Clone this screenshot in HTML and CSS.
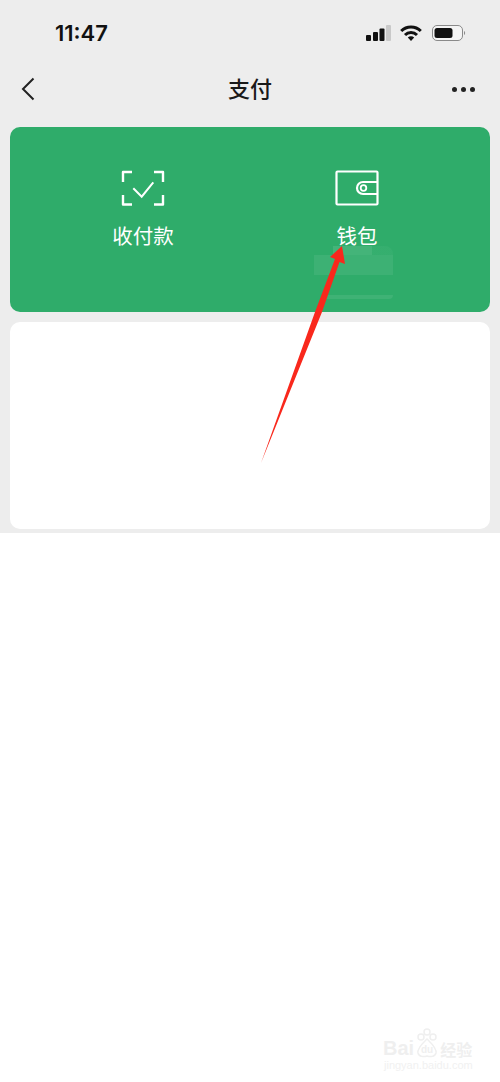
FILE: index.html
```html
<!DOCTYPE html>
<html>
    <head>
        <meta charset="utf-8">
        <link rel="stylesheet" href="styles.css">
    </head>
    <body>
        <div class="screen">
            <div class="status">
                <span class="time">11:47</span>
                <div class="status_icons">
                    <svg width="25" height="16" viewBox="0 0 25 16">
                        <rect x="0" y="10" width="5" height="6" rx="1" fill="#111"/>
                        <rect x="7" y="7" width="5" height="9" rx="1" fill="#111"/>
                        <rect x="13.5" y="3.5" width="5" height="12.5" rx="1" fill="#111"/>
                        <rect x="20" y="0" width="5" height="16" rx="1" fill="#c9c9c9"/>
                    </svg>
                    <svg width="22" height="16" viewBox="0 0 22 16">
                        <path d="M1.2 6 A14 14 0 0 1 20.8 6" fill="none" stroke="#111" stroke-width="3"/>
                        <path d="M5 10 A8.5 8.5 0 0 1 17 10" fill="none" stroke="#111" stroke-width="3"/>
                        <path d="M7.8 12.6 A4.6 4.6 0 0 1 14.2 12.6 L11 16 Z" fill="#111"/>
                    </svg>
                    <svg class="battery" width="34" height="16" viewBox="0 0 34 16">
                        <rect x="0.5" y="0.5" width="30" height="15" rx="4.5" fill="#f4f4f4" stroke="#8a8a8a"/>
                        <rect x="2.5" y="3" width="18" height="10" rx="2.5" fill="#111"/>
                        <path d="M32 6 C33.5 6.5 33.5 9.5 32 10 Z" fill="#8a8a8a"/>
                    </svg>
                </div>
            </div>
            <div class="nav">
                <svg class="back" width="14" height="24" viewBox="0 0 14 24">
                    <path d="M12.5 1.5 L2 12 L12.5 22.5" fill="none" stroke="#222" stroke-width="2"/>
                </svg>
                <h2 class="title">支付</h2>
                <div class="more"><i></i><i></i><i></i></div>
            </div>
            <div class="pay_card">
                <div class="pay_item">
                    <svg width="44" height="36" viewBox="0 0 44 36">
                        <path d="M11 2 H2 V12 M33 2 H42 V12 M2 25 V34.5 H11 M42 25 V34.5 H33" fill="none" stroke="#fff" stroke-width="2.4" stroke-linejoin="round"/>
                        <path d="M12.3 18.3 L20.7 26.7 L32.3 12.3" fill="none" stroke="#fff" stroke-width="2"/>
                    </svg>
                    <span>收付款</span>
                </div>
                <div class="pay_item">
                    <svg width="44" height="36" viewBox="0 0 44 36">
                        <rect x="1.5" y="1.5" width="41" height="33" rx="1" fill="none" stroke="#fff" stroke-width="2.2"/>
                        <path d="M42 12 H28 A6 6 0 0 0 28 24 H42" fill="none" stroke="#fff" stroke-width="2.2"/>
                        <circle cx="28.5" cy="18" r="2.8" fill="none" stroke="#fff" stroke-width="1.8"/>
                    </svg>
                    <span>钱包</span>
                </div>
                <div class="smudge_top"></div>
                <div class="smudge"></div>
                <div class="smudge_low"></div>
            </div>
            <div class="blank_card"></div>
        </div>
        <svg class="arrow" width="500" height="500" viewBox="0 0 500 500">
            <path d="M342 246 L345 264 L339.5 262 L322 312 L261 463 L315 312 L335 259 L330 257 Z" fill="#f9281c"/>
        </svg>
        <div class="mark">
            <span class="mark_bai">Bai</span>
            <svg width="22" height="30" viewBox="0 0 22 30">
                <circle cx="5" cy="9" r="3" fill="none" stroke="#efefef" stroke-width="1.5"/>
                <circle cx="11" cy="4" r="3" fill="none" stroke="#efefef" stroke-width="1.5"/>
                <circle cx="17" cy="9" r="3" fill="none" stroke="#efefef" stroke-width="1.5"/>
                <path d="M11 11 C7 15 1 20 2 25 C3 29 8 29 11 28 C14 29 19 29 20 25 C21 20 15 15 11 11 Z" fill="none" stroke="#efefef" stroke-width="1.5"/>
                <text x="11" y="25" text-anchor="middle" class="mark_du">du</text>
            </svg>
            <span class="mark_word">经验</span>
            <div class="mark_url">jingyan.baidu.com</div>
        </div>
    </body>
</html>
```

FILE: styles.css
```css
body{
    margin: 0;
    background: #fff;
    font-family: "Noto Sans CJK SC", "Liberation Sans", sans-serif;
    height: 1082px;
    overflow: hidden;
    position: relative;
}
.screen{
    background: #ededed;
    height: 533px;
    padding: 0 10px;
    box-sizing: border-box;
}
.status{
    display: flex;
    justify-content: space-between;
    align-items: center;
    height: 66px;
    padding: 0 24px 0 45px;
}
.time{
    font-family: Inter, "Liberation Sans", sans-serif;
    font-size: 22px;
    font-weight: 600;
    color: #111;
}
.status_icons{
    display: flex;
    align-items: center;
    gap: 9px;
}
.battery{
    margin-left: 1px;
}
.nav{
    display: grid;
    grid-template-columns: 1fr auto 1fr;
    align-items: center;
    height: 46px;
    padding: 0 15px;
}
.back{
    margin-left: -4px;
}
.title{
    margin: 0 0 4px;
    font-size: 22px;
    font-weight: 500;
    color: #191919;
}
.more{
    display: flex;
    gap: 4px;
    justify-self: end;
}
.more i{
    width: 5px;
    height: 5px;
    border-radius: 50%;
    background: #222;
}
.pay_card{
    position: relative;
    display: flex;
    margin-top: 15px;
    height: 185px;
    background: #2fac6a;
    border-radius: 10px;
    padding: 0 26px;
    box-sizing: border-box;
}
.pay_item{
    flex: 1;
    display: flex;
    flex-direction: column;
    align-items: center;
    padding-top: 43px;
    color: #fff;
    font-size: 20.5px;
    line-height: 30px;
}
.pay_item span{
    margin-top: 14px;
}
.smudge_top{
    position: absolute;
    left: 323px;
    top: 119px;
    width: 60px;
    height: 9px;
    background: linear-gradient(to right, rgba(255,255,255,.1) 65%, rgba(255,255,255,.03) 65%);
    border-radius: 0 8px 0 0;
}
.smudge{
    position: absolute;
    left: 304px;
    top: 128px;
    width: 79px;
    height: 20px;
    background: rgba(255,255,255,.07);
}
.smudge_low{
    position: absolute;
    left: 313px;
    top: 168px;
    width: 70px;
    height: 4px;
    background: rgba(255,255,255,.08);
    border-radius: 0 0 12px 12px;
}
.blank_card{
    margin-top: 10px;
    height: 207px;
    background: #fff;
    border-radius: 10px;
}
.arrow{
    position: absolute;
    left: 0;
    top: 0;
}
.mark{
    position: absolute;
    left: 383px;
    top: 1028px;
    width: 92px;
    display: flex;
    flex-wrap: wrap;
    align-items: flex-end;
    gap: 0 2px;
    color: #efefef;
}
.mark_bai{
    font-family: "Liberation Sans", sans-serif;
    font-size: 20px;
    font-weight: bold;
    line-height: 20px;
}
.mark_word{
    font-family: "Noto Sans CJK SC", sans-serif;
    font-size: 16px;
    font-weight: bold;
    line-height: 18px;
}
.mark_du{
    font-family: "Liberation Sans", sans-serif;
    font-size: 10px;
    font-weight: bold;
    fill: #efefef;
}
.mark_url{
    width: 100%;
    margin-left: 1px;
    font-family: "Liberation Sans", sans-serif;
    font-size: 11px;
    line-height: 14px;
    color: #f1f1f1;
}
```
